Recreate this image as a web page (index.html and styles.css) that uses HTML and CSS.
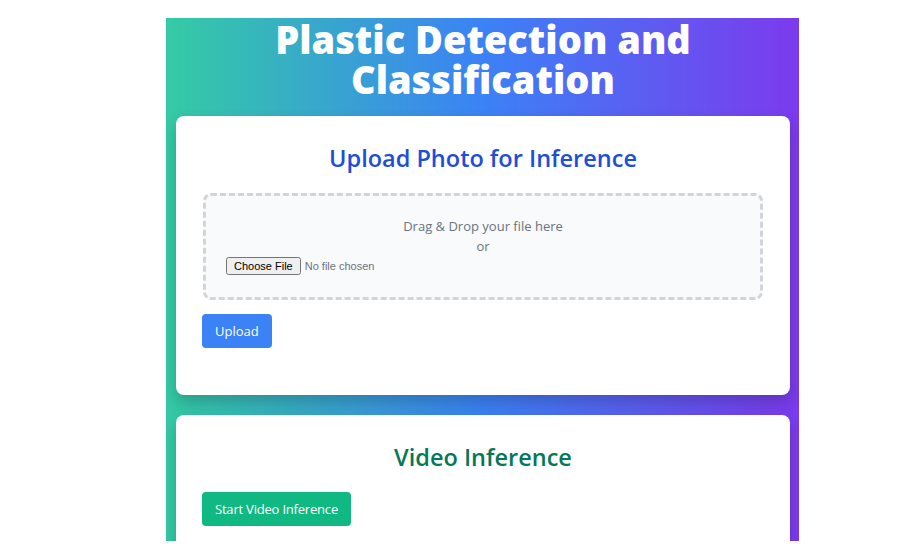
FILE: index.html
```html
<!DOCTYPE html>
<html lang="en">
<head>
<meta charset="utf-8">
<title>Plastic Detection and Classification</title>
<link rel="stylesheet" href="styles.css">
</head>
<body>
<div class="shell">
  <main class="stage">
    <h1 class="title">Plastic Detection and Classification</h1>

    <section class="card">
      <h2 class="card-title upload-title">Upload Photo for Inference</h2>
      <form class="upload-form">
        <div class="dropzone">
          <p class="drop-text">Drag &amp; Drop your file here</p>
          <p class="drop-text">or</p>
          <input class="file-input" type="file" accept="image/*">
        </div>
        <button type="button" class="btn btn-blue">Upload</button>
      </form>
      <div class="result"></div>
    </section>

    <section class="card">
      <h2 class="card-title video-title">Video Inference</h2>
      <button type="button" class="btn btn-green">Start Video Inference</button>
    </section>
  </main>
</div>
</body>
</html>
```

FILE: styles.css
```css
* { box-sizing: border-box; }

html, body {
  margin: 0;
  padding: 0;
  background: #ffffff;
}

body {
  font-family: "Open Sans", "Noto Sans", sans-serif;
}

.shell {
  padding: 18px 0 0 166px;
}

.stage {
  width: 633px;
  height: 523px;
  overflow: hidden;
  padding: 0 9px 0 10px;
  background: linear-gradient(to right, #34cba4 0%, #3b82f6 50%, #7c3aed 100%);
  display: flex;
  flex-direction: column;
  gap: 20px;
}

.title {
  margin: 0 0 -3px;
  padding-top: 1px;
  color: #ffffff;
  font-size: 38px;
  line-height: 40px;
  font-weight: 800;
  text-align: center;
}

.card {
  flex-shrink: 0;
  background: #ffffff;
  border-radius: 8px;
  padding: 26px;
  box-shadow: 0 8px 16px rgba(0, 0, 0, 0.2);
}

.card-title {
  margin: 0 0 19px;
  font-size: 23.5px;
  line-height: 32px;
  font-weight: 600;
  text-align: center;
}

.upload-title { color: #1d4ed8; }
.video-title { color: #047857; }

.upload-form {
  display: flex;
  flex-direction: column;
  align-items: flex-start;
  gap: 14px;
}

.dropzone {
  align-self: stretch;
  margin: 0 1px;
  border: 3px dashed #d1d5db;
  border-radius: 8px;
  background: #f9fafb;
  padding: 20px 20px 22px;
}

.drop-text {
  margin: 0;
  text-align: center;
  color: #6b7280;
  font-size: 13px;
  line-height: 20px;
}

.file-input {
  display: block;
  margin-top: 1px;
  color: #6b7280;
  font-family: "Liberation Sans", Arial, sans-serif;
  font-size: 11px;
}

.result {
  height: 21px;
}

.btn {
  border: none;
  border-radius: 4px;
  color: #ffffff;
  font-family: "Open Sans", "Noto Sans", sans-serif;
  font-size: 13px;
  line-height: 18px;
  padding: 8px 13px;
  cursor: pointer;
}

.btn-blue { background: #3b82f6; }
.btn-green {
  background: #10b981;
  letter-spacing: -0.2px;
}
```
